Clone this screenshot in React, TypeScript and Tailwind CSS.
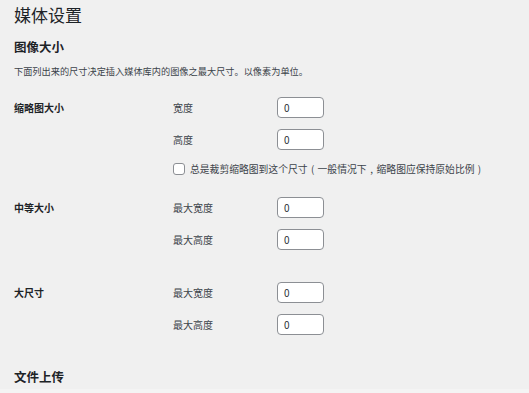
const font = { fontFamily: '"Noto Sans CJK SC", "Noto Sans", Arial, sans-serif' };

function SizeInput() {
  return (
    <div className="w-[47px] h-[21px] bg-white border border-[#8c8f94] rounded-[4px] px-[6px] text-[10px] leading-[19px] text-[#2c3338]">
      0
    </div>
  );
}

function Row({ head, label, first }: { head?: string; label: string; first?: boolean }) {
  return (
    <div className={`flex items-center h-[21px] ${first ? '' : 'mt-[11px]'}`}>
      <div className="w-[159px] text-[10px] font-bold text-[#1d2327]">{head}</div>
      <div className="w-[104px] text-[10px] text-[#3c434a]">{label}</div>
      <SizeInput />
    </div>
  );
}

function Punct({ c }: { c: string }) {
  return <span className="inline-block w-[10px] text-center">{c}</span>;
}

export default function App() {
  return (
    <div className="w-[529px] h-[393px] bg-[#f0f0f0] overflow-hidden flex flex-col" style={font}>
      <div className="pl-[14px] flex flex-col">
        <h1 className="h-[30px] leading-[30px] text-[17px] text-[#1d2327]">媒体设置</h1>
        <h2 className="mt-[7px] leading-[20px] text-[12.5px] font-bold text-[#1d2327]">图像大小</h2>
        <p className="mt-[6px] leading-[16px] text-[9.2px] text-[#3c434a]">
          下面列出来的尺寸决定插入媒体库内的图像之最大尺寸。以像素为单位。
        </p>

        {/* Thumbnail */}
        <div className="mt-[18px]">
          <Row first head="缩略图大小" label="宽度" />
          <Row label="高度" />
          <div className="flex items-center h-[16px] mt-[11px]">
            <div className="w-[159px]" />
            <div className="w-[12px] h-[12px] bg-white border border-[#8c8f94] rounded-[3px]" />
            <span className="ml-[5px] text-[9.8px] text-[#3c434a] whitespace-nowrap">
              总是裁剪缩略图到这个尺寸<Punct c="(" />一般情况下<Punct c="," />缩略图应保持原始比例<Punct c=")" />
            </span>
          </div>
        </div>

        {/* Medium */}
        <div className="mt-[20px]">
          <Row first head="中等大小" label="最大宽度" />
          <Row label="最大高度" />
        </div>

        {/* Large */}
        <div className="mt-[32px]">
          <Row first head="大尺寸" label="最大宽度" />
          <Row label="最大高度" />
        </div>

        <h2 className="mt-[32px] leading-[20px] text-[12.5px] font-bold text-[#1d2327]">文件上传</h2>
      </div>
      <div className="mt-auto h-[4px] bg-[#f4f4f4]" />
    </div>
  );
}
